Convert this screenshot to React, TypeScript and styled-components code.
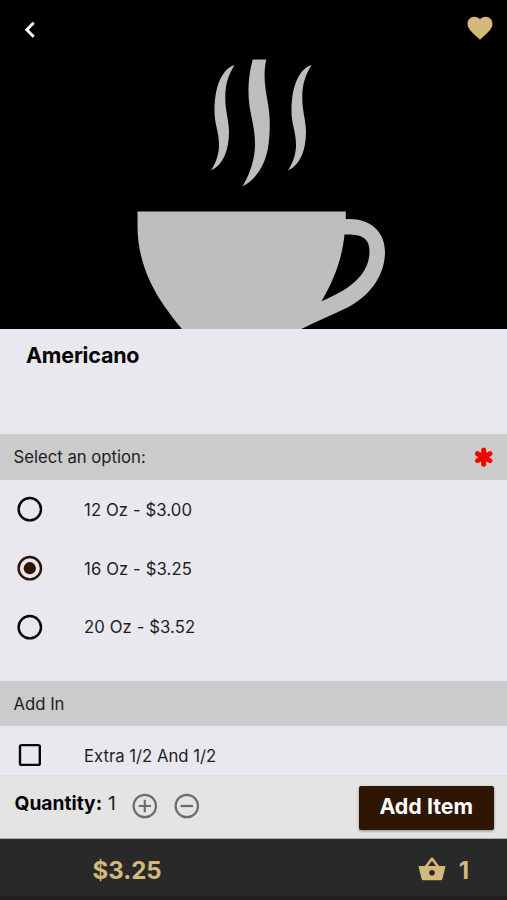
import React, { useState } from "react";
import styled, { createGlobalStyle } from "styled-components";

const GlobalStyle = createGlobalStyle`
  *, *::before, *::after { box-sizing: border-box; }
  body { margin: 0; background: #292929; }
  button { font: inherit; border: 0; padding: 0; background: none; cursor: pointer; }
`;

const Screen = styled.main`
  width: 507px;
  height: 900px;
  display: flex;
  flex-direction: column;
  overflow: hidden;
  background: #e9e8ee;
  color: #1c1c1e;
  font-family: Inter, "Liberation Sans", sans-serif;
`;

const Hero = styled.header`
  position: relative;
  height: 329px;
  flex: none;
  background: #000;
`;

const HeroArt = styled.svg`
  display: block;
  width: 507px;
  height: 329px;
`;

const HeroActions = styled.div`
  position: absolute;
  inset: 0 0 auto 0;
  display: flex;
  justify-content: space-between;
  padding: 13px 12px 0 14px;
`;

const IconButton = styled.button`
  display: block;
  width: 30px;
  height: 30px;
  flex: none;
`;

const Glyph = styled.svg<{ $size: number }>`
  display: block;
  flex: none;
  width: ${(p) => p.$size}px;
  height: ${(p) => p.$size}px;
`;

const TitleBlock = styled.section`
  height: 105px;
  flex: none;
  padding: 12px 26px;
`;

const Title = styled.h1`
  margin: 0;
  color: #050507;
  font-size: 21.5px;
  font-weight: 700;
  letter-spacing: -0.2px;
  line-height: 28px;
`;

const SectionHeader = styled.h2<{ $height: number }>`
  display: flex;
  align-items: center;
  justify-content: space-between;
  flex: none;
  height: ${(p) => p.$height}px;
  margin: 0;
  padding: 0 14px 0 13.5px;
  background: #cbcbcb;
  color: #1d1d1f;
  font-size: 16.7px;
  font-weight: 400;
  line-height: 20px;
`;

const Options = styled.div<{ $height: number }>`
  flex: none;
  height: ${(p) => p.$height}px;
  overflow: hidden;
`;

const OptionRow = styled.button`
  display: flex;
  align-items: center;
  gap: 39px;
  width: 100%;
  height: 58.8px;
  padding-left: 15px;
  color: #1d1d1f;
  font-size: 16.7px;
  text-align: left;
`;

const OptionLabel = styled.span<{ $tracking?: number }>`
  padding-top: 1px;
  letter-spacing: ${(p) => p.$tracking ?? 0}px;
`;

const OrderBar = styled.section`
  display: flex;
  align-items: flex-start;
  flex: none;
  height: 64px;
  padding: 11px 13.5px 0 14.5px;
  background: #e4e4e4;
  border-top: 1px solid #dedee2;
  border-bottom: 1px solid #aaa;
`;

const Quantity = styled.div`
  display: flex;
  gap: 6px;
  width: 115px;
  font-size: 19.2px;
  line-height: 33px;
  white-space: nowrap;
`;

const QuantityLabel = styled.strong`
  color: #050507;
  font-weight: 700;
`;

const Steppers = styled.div`
  display: flex;
  gap: 12px;
  padding-top: 4px;
`;

const AddButton = styled.button`
  width: 134.5px;
  height: 44px;
  margin-left: auto;
  margin-top: -1px;
  padding-bottom: 4px;
  border-radius: 2px;
  background: #2e1605;
  color: #fff;
  font-size: 21.4px;
  font-weight: 700;
  box-shadow: 0 1px 3px rgba(0, 0, 0, 0.4);
`;

const Footer = styled.footer`
  display: flex;
  align-items: center;
  justify-content: space-between;
  flex: none;
  height: 61px;
  padding: 5px 38px 0 92.5px;
  background: #292929;
  border-bottom: 4px solid #211c20;
  color: #d3b97c;
  font-size: 24px;
  font-weight: 700;
`;

const Cart = styled.div`
  display: flex;
  align-items: center;
  gap: 12px;
`;

const RadioIcon = ({ on }: { on: boolean }) => (
  <Glyph $size={30} viewBox="0 0 30 30" fill="none">
    <circle cx="14.8" cy="15.2" r="11.2" stroke={on ? "#2e1605" : "#08080c"} strokeWidth="2.4" />
    {on && <circle cx="14.8" cy="15.2" r="6.1" fill="#2e1605" />}
  </Glyph>
);

const StepIcon = ({ plus }: { plus?: boolean }) => (
  <Glyph $size={30} viewBox="0 0 30 30" fill="none" stroke="#6b6b6b" strokeWidth="2.2">
    <circle cx="14.8" cy="15" r="11.2" />
    <path d={plus ? "M8.6 15h12.4M14.8 8.8v12.4" : "M8.6 15h12.4"} />
  </Glyph>
);

const sizes = ["12 Oz - $3.00", "16 Oz - $3.25", "20 Oz - $3.52"];

export default function App() {
  const [selected, setSelected] = useState(1);
  return (
    <>
      <GlobalStyle />
      <Screen>
        <Hero>
          <HeroArt viewBox="0 0 507 329" fill="#bebebe">
            <path d="M234.500 65C220 70 214.500 90 214.500 111C214.500 125 219 131 219 145C219 154 216 163 211 170.500C223 165 229 150 229 132C229 119 225 112 225.300 96C225.600 83 228.500 75 234.500 65Z" />
            <path d="M311.500 65C297 70 291.500 90 291.500 111C291.500 125 296 131 296 145C296 154 293 163 288 170.500C300 165 306 150 306 132C306 119 302 112 302.300 96C302.600 83 305.500 75 311.500 65Z" />
            <path d="M252.700 59.500H266.300C263 74 265 87 267.500 101C270 115 270.500 126 268.700 143C266.500 163 257 179 242.500 186.500C251 172 255 158 255 144C255 129 251.500 119 249.500 106C247.300 90 248.700 74 252.700 59.500Z" />
            <path
              fillRule="evenodd"
              d="M137.500 211.500H345.800V219.200C368 217.500 385 230 385 252C385 277 368 297 347.500 307.500C332 315.500 316 321 301.500 329H182C163 306 137.500 273 137.500 226ZM344.500 234.500C342 259 334 280 321.500 301.200C348 290 369.500 276 369.500 251C369.500 237 360 233.800 344.500 234.500Z"
            />
          </HeroArt>
          <HeroActions>
            <IconButton aria-label="Back">
              <Glyph $size={30} viewBox="0 0 30 30" fill="none" stroke="#fff" strokeWidth="2.900">
                <path d="M19.700 9.700 12.800 16.700l6.900 7" />
              </Glyph>
            </IconButton>
            <IconButton aria-label="Favorite">
              <Glyph $size={30} viewBox="0 0 24 24" fill="#d3b97c">
                <path d="m12 21.350-1.450-1.320C5.400 15.360 2 12.280 2 8.500 2 5.420 4.420 3 7.500 3c1.740 0 3.410.81 4.500 2.090C13.090 3.810 14.760 3 16.500 3 19.580 3 22 5.420 22 8.500c0 3.780-3.400 6.860-8.550 11.540L12 21.350z" />
              </Glyph>
            </IconButton>
          </HeroActions>
        </Hero>

        <TitleBlock>
          <Title>Americano</Title>
        </TitleBlock>

        <SectionHeader $height={46}>
          <span>Select an option:</span>
          <Glyph $size={20} viewBox="0 0 20 20" stroke="#f90000" strokeWidth="5" strokeLinecap="round">
            <path d="M10.700 3v14.200M4.500 6.700l12.400 6.900M16.900 6.700l-12.400 6.900" />
            <circle cx="10.700" cy="10.100" r="3" fill="#f90000" strokeWidth="2.500" />
          </Glyph>
        </SectionHeader>
        <Options $height={201}>
          {sizes.map((label, i) => (
            <OptionRow key={label} onClick={() => setSelected(i)}>
              <RadioIcon on={selected === i} />
              <OptionLabel $tracking={0.1}>{label}</OptionLabel>
            </OptionRow>
          ))}
        </Options>

        <SectionHeader $height={45}>
          <span>Add In</span>
        </SectionHeader>
        <Options $height={49}>
          <OptionRow>
            <Glyph $size={30} viewBox="0 0 30 30" fill="none">
              <rect x="5" y="5.100" width="19.800" height="19.800" rx="1.500" stroke="#08080c" strokeWidth="2.400" />
            </Glyph>
            <OptionLabel>Extra 1/2 And 1/2</OptionLabel>
          </OptionRow>
        </Options>

        <OrderBar>
          <Quantity>
            <QuantityLabel>Quantity:</QuantityLabel>
            <span>1</span>
          </Quantity>
          <Steppers>
            <IconButton aria-label="Increase quantity"><StepIcon plus /></IconButton>
            <IconButton aria-label="Decrease quantity"><StepIcon /></IconButton>
          </Steppers>
          <AddButton>Add Item</AddButton>
        </OrderBar>

        <Footer>
          <span>$3.25</span>
          <Cart>
            <Glyph $size={30} viewBox="0 0 30 30" fill="#d3b97c">
              <path
                fillRule="evenodd"
                d="M1.500 11H7.800L13.700 3.300Q15 1.800 16.300 3.300L22.200 11H28.500L25.500 23.800Q25.100 25.300 23.600 25.300H6.400Q4.900 25.300 4.500 23.800ZM11.100 11H18.900L15 5.700ZM15 15A2.800 2.800 0 1 0 15 20.600A2.800 2.800 0 1 0 15 15Z"
              />
            </Glyph>
            <span>1</span>
          </Cart>
        </Footer>
      </Screen>
    </>
  );
}
